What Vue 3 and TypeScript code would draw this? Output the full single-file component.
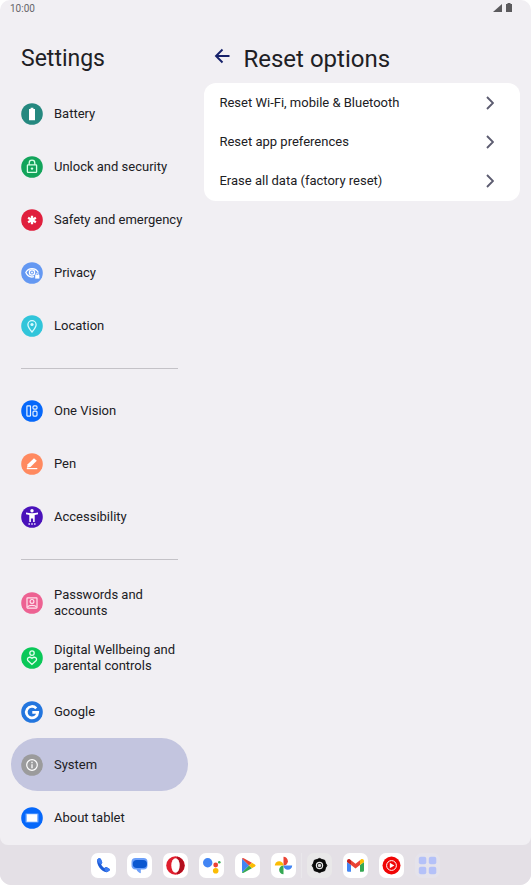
<script setup lang="ts">
import { ref } from 'vue'

interface MenuItem {
  label: string
  color: string
  art: string
}

interface DockApp {
  label: string
  tile: string
  art: string
}

const groups: MenuItem[][] = [
  [
    {
      label: 'Battery',
      color: '#25887f',
      art: '<path d="M9.600 4.800h2.800v1.200H14v11.200H8V6h1.600z" fill="#fff"/>',
    },
    {
      label: 'Unlock and security',
      color: '#13a45b',
      art: '<g fill="none" stroke="#d8ffe6" stroke-width="1.300"><rect x="6.400" y="8.800" width="9.200" height="7.600" rx=".6"/><path d="M8.200 8.800V7a2.800 2.800 0 0 1 5.600 0v1.800"/></g><circle cx="11" cy="12.600" r="1.200" fill="#d8ffe6"/>',
    },
    {
      label: 'Safety and emergency',
      color: '#e01f3d',
      art: '<path d="M11 6.700v8.600M7.100 8.800l7.800 4.400M14.900 8.800l-7.800 4.400" stroke="#fff" stroke-width="2.300"/>',
    },
    {
      label: 'Privacy',
      color: '#6498f2',
      art: '<g fill="none" stroke="#fff" stroke-width="1.300"><path d="M13 14.700C9.300 15.700 6.300 13.600 4.800 10.500c2.600-5.200 9.800-5.200 12.600 0"/><circle cx="11" cy="10.500" r="2.600"/></g><circle cx="11" cy="10.500" r="1" fill="#fff"/><path d="M14.200 12.800h4.200v3.800h-4.200z" fill="#fff"/><path d="M15.200 13v-.8a1.100 1.100 0 0 1 2.200 0v.8" fill="none" stroke="#fff" stroke-width=".8"/>',
    },
    {
      label: 'Location',
      color: '#31c5da',
      art: '<path d="M11 17c-2.600-3-4.100-5.200-4.100-7.200a4.100 4.100 0 0 1 8.200 0c0 2-1.500 4.200-4.100 7.200z" fill="none" stroke="#d9fbff" stroke-width="1.300"/><circle cx="11" cy="9.500" r="1.600" fill="#d9fbff"/>',
    },
  ],
  [
    {
      label: 'One Vision',
      color: '#0668fa',
      art: '<g fill="none" stroke="#e6f2ff" stroke-width="1.200"><rect x="5.900" y="5.900" width="3.600" height="10.200" rx=".5"/><rect x="12" y="5.900" width="4" height="3.200" rx="1"/><rect x="12" y="11.200" width="4" height="4.900" rx="1"/></g>',
    },
    {
      label: 'Pen',
      color: '#ff895f',
      art: '<path d="M5.900 14.700l.8-3.400 6.300-6.100 2.800 2.600-6.300 6.200z" fill="#fff"/><path d="M5.800 15.600h10.500" stroke="#fff" stroke-width="1.200"/>',
    },
    {
      label: 'Accessibility',
      color: '#4a12ba',
      art: '<circle cx="11" cy="4.800" r="1.700" fill="#fff"/><path d="M5 6.500c4 .9 8 .9 12 0v1.800l-3.300.7v7h-1.600v-3.400H9.900V16H8.300V9L5 8.300z" fill="#fff"/><path d="M7.400 18h1.600M10.200 18h1.600M13 18h1.600" stroke="#e6dcff" stroke-width="1.400"/>',
    },
  ],
  [
    {
      label: 'Passwords and accounts',
      color: '#ed6292',
      art: '<g fill="none" stroke="#ffe3ed" stroke-width="1.200"><rect x="6" y="5.900" width="10" height="10.200" rx=".5"/><circle cx="11" cy="9.400" r="1.900"/><path d="M6.500 15c1.300-2.100 7.700-2.100 9 0"/></g>',
    },
    {
      label: 'Digital Wellbeing and parental controls',
      color: '#0ac858',
      art: '<g fill="none" stroke="#e0ffec" stroke-width="1.300"><circle cx="11" cy="6.100" r="2.200"/><path d="M11 17.400l-3.700-3.300c-2.500-2.600 1-5.400 3.700-2.700 2.700-2.700 6.200.1 3.700 2.700z"/></g>',
    },
    {
      label: 'Google',
      color: '#2275de',
      art: '<path d="M15.200 7.300A5.700 5.700 0 1 0 16.700 11.400H11.300" fill="none" stroke="#fff" stroke-width="2.700"/>',
    },
    {
      label: 'System',
      color: '#9b9b9c',
      art: '<circle cx="11" cy="11" r="5.300" fill="none" stroke="#fff" stroke-width="1.200"/><path d="M11 7.700v1.500M11 10.200v4" stroke="#fff" stroke-width="1.300"/>',
    },
    {
      label: 'About tablet',
      color: '#0668fa',
      art: '<rect x="4.600" y="6.600" width="12.800" height="8.800" fill="#8ab8ff"/><rect x="6" y="7.300" width="10" height="7.300" fill="#fff"/>',
    },
  ],
]

const resets: string[] = [
  'Reset Wi-Fi, mobile & Bluetooth',
  'Reset app preferences',
  'Erase all data (factory reset)',
]

const dock: DockApp[] = [
  {
    label: 'Phone',
    tile: 'white',
    art: '<path d="M6.200 6.800c-1 4.400 3.700 12 9.600 12.400l2.500-1.400c.8-.6.7-1.700 0-2.100l-2.500-1.500c-.9-.5-1.500.2-2.200.9-1.500-.8-2.700-2.200-3.500-3.900.8-.7 1.400-1.300 1-2.200L10 6.200C9.100 4.600 6.800 5.300 6.200 6.800z" fill="#1b5bd7"/><path d="M6.200 6.800C6.800 5.300 9.100 4.600 10 6.200l1.100 2.800c.4.900-.2 1.500-1 2.200-1.800-.4-3.300-2-3.900-4.400zM15.800 19.200l2.500-1.400c.8-.6.7-1.700 0-2.100l-2.500-1.500c-.9-.5-1.500.2-2.200.9 0 2 .6 3.500 2.200 4.100z" fill="#3c7bf0"/>',
  },
  {
    label: 'Messages',
    tile: 'white',
    art: '<path d="M8.500 5h8a4 4 0 0 1 4 4v3.500a4 4 0 0 1-4 4h-2.700v3.700c-2-.4-3.800-2-4.300-3.700h-1A4 4 0 0 1 4.500 12V9a4 4 0 0 1 4-4z" fill="#6da0fa"/><rect x="5.800" y="7" width="14.200" height="8" rx="4" fill="#0b57d0"/>',
  },
  {
    label: 'Opera',
    tile: 'white',
    art: '<circle cx="12.500" cy="12.500" r="9.300" fill="#e01e2e"/><path d="M14 3.400a9.300 9.300 0 0 1 0 18.200z" fill="#b10e1e"/><ellipse cx="12.500" cy="12.500" rx="4.200" ry="7.300" fill="#fff"/>',
  },
  {
    label: 'Assistant',
    tile: 'white',
    art: '<circle cx="8.700" cy="9.700" r="4.700" fill="#4285f4"/><circle cx="16.700" cy="12" r="2.400" fill="#ea4335"/><circle cx="16.700" cy="17.700" r="2.800" fill="#fbbc04"/><circle cx="20.300" cy="9.200" r="1.300" fill="#34a853"/>',
  },
  {
    label: 'Play Store',
    tile: 'white',
    art: '<path d="M7 5.500v14l7-7z" fill="#4285f4"/><path d="M7 5.500q.5-1 1.700-.3l8.200 4.600-2.900 2.700z" fill="#ea4335"/><path d="M7 19.500q.5 1 1.700.3l8.200-4.600-2.900-2.700z" fill="#34a853"/><path d="M16.900 9.800l3 1.700q1.300 1 0 2l-3 1.700-2.900-2.700z" fill="#fbbc04"/>',
  },
  {
    label: 'Photos',
    tile: 'white',
    art: '<path d="M12.500 12.500V3.800a4.350 4.350 0 0 1 0 8.700z" fill="#ea4335"/><path d="M12.500 12.500h8.700a4.350 4.350 0 0 1-8.700 0z" fill="#4285f4"/><path d="M12.500 12.500v8.700a4.350 4.350 0 0 1 0-8.700z" fill="#34a853"/><path d="M12.500 12.500H3.800a4.350 4.350 0 0 1 8.700 0z" fill="#fbbc04"/>',
  },
  {
    label: 'Settings',
    tile: 'grey',
    art: '<path d="M12.500 5.400l2.500 1.200 2.700.7.700 2.700 1.400 2.500-1.400 2.500-.7 2.700-2.700.7-2.500 1.200-2.500-1.200-2.700-.7-.7-2.700-1.400-2.500 1.400-2.500.7-2.700 2.700-.7z" fill="#090909" stroke="#090909" stroke-linejoin="round"/><circle cx="12.500" cy="12.500" r="3.700" fill="#e9e8e9"/><circle cx="12.500" cy="12.500" r="2.500" fill="#090909"/><circle cx="12.500" cy="12.500" r="1.700" fill="#d8d8d8"/>',
  },
  {
    label: 'Gmail',
    tile: 'white',
    art: '<path d="M4 9l4 3v6.700H5.200A1.200 1.200 0 0 1 4 17.500z" fill="#4285f4"/><path d="M21 9l-4 3v6.700h2.800a1.200 1.200 0 0 0 1.200-1.200z" fill="#34a853"/><path d="M8 7.300l4.500 3.500L17 7.300V12l-4.500 3.500L8 12z" fill="#ea4335"/><path d="M4 9V8c0-1.900 1.900-2.500 3.100-1.500L8 7.300V12z" fill="#c5221f"/><path d="M21 9V8c0-1.900-1.900-2.500-3.100-1.500l-.9.800V12z" fill="#fbbc04"/>',
  },
  {
    label: 'YouTube Music',
    tile: 'white',
    art: '<circle cx="12.500" cy="12.500" r="9" fill="#f00505"/><circle cx="12.500" cy="12.500" r="4.900" fill="none" stroke="#fff" stroke-width="1"/><path d="M10.800 9.700v5.600l4.600-2.800z" fill="#fff"/>',
  },
  {
    label: 'All apps',
    tile: 'clear',
    art: '<g fill="#b4c1f8"><rect x="3.800" y="3.800" width="7.500" height="7.500" rx="2"/><rect x="13.800" y="3.800" width="7.500" height="7.500" rx="2"/><rect x="3.800" y="13.800" width="7.500" height="7.500" rx="2"/><rect x="13.800" y="13.800" width="7.500" height="7.500" rx="2"/></g>',
  },
]

const selected = ref('System')
</script>

<template>
  <div class="device">
    <div class="screen">
      <header class="status">
        <span>10:00</span>
        <svg class="status-icons" viewBox="0 0 20 10" aria-hidden="true">
          <path d="M9 1v8H0z" fill="#5b5a5d" />
          <path d="M13 1h1.500V0h3v1H19v8h-6z" fill="#5b5a5d" />
        </svg>
      </header>

      <div class="panes">
        <nav class="menu" aria-labelledby="menu-title">
          <h1 id="menu-title">Settings</h1>
          <ul v-for="(group, index) in groups" :key="index" class="group">
            <li v-for="item in group" :key="item.label">
              <button
                type="button"
                class="entry"
                :class="{ active: item.label === selected }"
                :aria-current="item.label === selected ? 'page' : undefined"
                @click="selected = item.label"
              >
                <svg class="entry-icon" viewBox="0 0 22 22" aria-hidden="true">
                  <circle cx="11" cy="11" r="10.800" :fill="item.color" />
                  <g v-html="item.art" />
                </svg>
                <span>{{ item.label }}</span>
              </button>
            </li>
          </ul>
        </nav>

        <main class="detail">
          <div class="heading">
            <button type="button" class="back" aria-label="Back">
              <svg viewBox="0 0 16 16" aria-hidden="true">
                <path d="M15.500 8H2.500M8.500 1.500L2 8l6.500 6.500" fill="none" stroke="#16216a" stroke-width="1.900" />
              </svg>
            </button>
            <h2>Reset options</h2>
          </div>
          <ul class="card">
            <li v-for="label in resets" :key="label">
              <button type="button" class="option">
                <span>{{ label }}</span>
                <svg class="chevron" viewBox="0 0 8 14" aria-hidden="true">
                  <path d="M1 1l6 6-6 6" fill="none" stroke="#5c5c70" stroke-width="1.900" />
                </svg>
              </button>
            </li>
          </ul>
        </main>
      </div>
    </div>

    <footer class="dock">
      <button
        v-for="app in dock"
        :key="app.label"
        type="button"
        class="app"
        :class="app.tile"
        :aria-label="app.label"
      >
        <svg viewBox="0 0 25 25" aria-hidden="true" v-html="app.art" />
      </button>
    </footer>
  </div>
</template>

<style>
body {
  background: #fff;
}
</style>

<style scoped>
.device {
  box-sizing: border-box;
  display: flex;
  flex-direction: column;
  min-height: 100vh;
  padding-bottom: 1px;
  background: linear-gradient(#fff 50%, #e4e0e6 50%);
  background-clip: content-box;
  border-radius: 0 0 12px 12px;
  font-family: Roboto, "Liberation Sans", sans-serif;
  color: #202024;
}

.device *,
.device *::before {
  box-sizing: border-box;
}

button {
  margin: 0;
  border: 0;
  background: none;
  font: inherit;
  color: inherit;
  text-align: left;
  cursor: pointer;
}

svg {
  display: block;
}

ul {
  margin: 0;
  padding: 0;
  list-style: none;
}

h1,
h2 {
  margin: 0;
  line-height: 28px;
  font-weight: 400;
}

h1 {
  font-size: 23px;
}

h2 {
  font-size: 24px;
}

.screen {
  flex: 1;
  background: #f1eff3;
  border-radius: 10px 10px 8px 8px;
}

.status {
  display: flex;
  align-items: center;
  justify-content: space-between;
  height: 16px;
  padding: 0 18px 0 10px;
  font-size: 10px;
  color: #66656a;
}

.status-icons {
  width: 20px;
  height: 10px;
}

.panes {
  display: grid;
  grid-template-columns: 9fr 16fr;
  gap: 16px;
  padding: 29px 11px 0;
}

.menu h1 {
  padding-left: 10px;
  margin-bottom: 14px;
}

.group + .group::before {
  content: "";
  display: block;
  height: 1px;
  margin: 16px 10px 15px;
  background: #c4c2c7;
}

.entry {
  display: flex;
  align-items: center;
  gap: 11px;
  width: 100%;
  min-height: 53px;
  padding: 12px 0 11px 10px;
  border-radius: 27px;
  font-size: 13px;
  line-height: 16px;
}

.entry.active {
  background: #c3c5df;
}

.entry-icon {
  flex: none;
  width: 22px;
  height: 22px;
}

.heading {
  display: flex;
  align-items: center;
  gap: 13px;
  padding-left: 10px;
}

.back {
  padding: 0 0 6px;
}

.back svg {
  width: 16px;
  height: 16px;
}

.card {
  margin-top: 10px;
  padding-bottom: 1px;
  background: #fff;
  border-radius: 12px;
}

.option {
  display: flex;
  align-items: center;
  justify-content: space-between;
  width: 100%;
  min-height: 39px;
  padding: 0 26px 0 15px;
  font-size: 13px;
  line-height: 16px;
}

.chevron {
  width: 8px;
  height: 14px;
}

.dock {
  display: flex;
  justify-content: center;
  gap: 11px;
  padding: 8px 0 7px;
  background: #e4e0e6;
  border-radius: 0 0 12px 12px;
}

.app {
  position: relative;
  width: 25px;
  height: 25px;
  padding: 0;
  border-radius: 7px;
}

.app.white {
  background: #fff;
}

.app.grey {
  background: #e9e8e9;
}

.app.grey::before {
  content: "";
  position: absolute;
  top: 0;
  left: -6px;
  width: 1px;
  height: 100%;
  background: #e9e7eb;
}

.app.clear {
  background: #e5e3eb;
}
</style>
